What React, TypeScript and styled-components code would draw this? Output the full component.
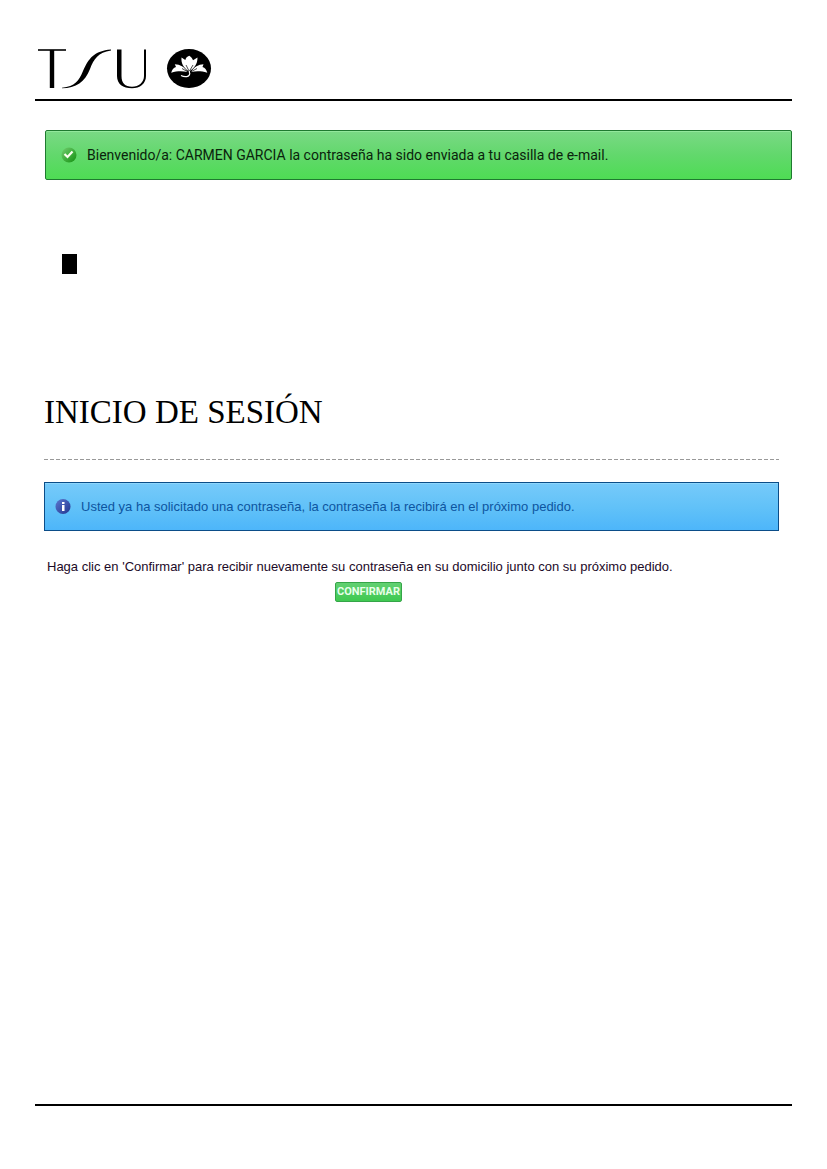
import React from "react";
import styled, { createGlobalStyle } from "styled-components";

const GlobalStyle = createGlobalStyle`
  *, *::before, *::after { box-sizing: border-box; }
  body {
    margin: 0;
    background: #fff;
    color: #000;
    font-family: "Liberation Sans", Arial, sans-serif;
  }
`;

const Page = styled.div`
  display: flex;
  flex-direction: column;
  min-height: 100vh;
  padding: 48px 35px 63px;
`;

const Header = styled.header`
  display: flex;
  height: 53px;
  border-bottom: 2px solid #000;
`;

const Logo = styled.svg`
  display: block;
  width: 180px;
  height: 42px;
`;

const Main = styled.main`
  flex: 1;
  padding: 29px 0 0 9px;
`;

const Notice = styled.div<{ $kind: "success" | "info" }>`
  display: flex;
  align-items: center;
  border: 1px solid ${(p) => (p.$kind === "success" ? "#1f7a30" : "#0b4d88")};
  border-radius: ${(p) => (p.$kind === "success" ? "2px" : "0")};
  background: ${(p) =>
    p.$kind === "success"
      ? "linear-gradient(#7ad985, #62d86c 50%, #4edc54)"
      : "linear-gradient(#76cafa, #62c2f8 50%, #4db6fa)"};
  box-shadow: inset 0 1px 0 ${(p) => (p.$kind === "success" ? "#93e89c" : "#8dd6fc")};
  color: ${(p) => (p.$kind === "success" ? "#0a230c" : "#0d55a0")};
`;

const SuccessNotice = styled(Notice)`
  gap: 10px;
  height: 50px;
  margin-left: 1px;
  padding: 0 15px;
  font-family: Roboto, "Liberation Sans", sans-serif;
  font-size: 14px;
`;

const InfoNotice = styled(Notice)`
  gap: 10px;
  height: 49px;
  padding: 0 10px;
  font-size: 13px;
`;

const StatusIcon = styled.svg`
  flex: none;
  width: 16px;
  height: 16px;
`;

const Marker = styled.div`
  width: 15px;
  height: 20px;
  margin: 74px 0 0 18px;
  background: #000;
`;

const Login = styled.section`
  margin: 120px 13px 0 0;
`;

const Title = styled.h1`
  margin: 0;
  font: 400 33px/36px "Liberation Serif", "Times New Roman", serif;
`;

const Divider = styled.svg`
  display: block;
  width: 100%;
  height: 1px;
  margin: 29px 0 22px;
`;

const ConfirmForm = styled.form`
  display: flex;
  flex-direction: column;
  align-items: center;
  gap: 7px;
  margin-top: 27px;
`;

const Message = styled.p`
  align-self: stretch;
  margin: 0;
  padding-left: 3px;
  font-size: 13px;
  line-height: 17px;
  color: #1c0a28;
`;

const ConfirmButton = styled.button`
  height: 20px;
  margin-right: 86px;
  padding: 0 1px;
  border: 1px solid #35a548;
  border-radius: 2px;
  background: linear-gradient(#62d072, #3fc951);
  color: #e8ffe9;
  font: 700 11px/18px Roboto, "Liberation Sans", sans-serif;
  cursor: pointer;
`;

const Footer = styled.footer`
  border-top: 2px solid #000;
`;

function TsuLogo() {
  return (
    <Logo viewBox="35 48 180 42" role="img" aria-label="TSU">
      <path d="M38 50H66" stroke="#000" strokeWidth="1.6" />
      <path d="M52 50V88" stroke="#000" strokeWidth="4.4" />
      <path d="M62 87.8C75 86.5 79 80.500 83 71C89 58 94 51 111 49.500V50.600C98 52.500 94 59 90 69C85 82 76 88 62 88.300Z" />
      <path d="M117 49.500H121.500V76C121.500 83 125 86.800 132 86.800C139 86.800 144 82 144 76V49.500H146V76C146 83.500 140 88.300 132 88.300C123 88.300 117 84 117 76Z" />
      <ellipse cx="189" cy="68.500" rx="22" ry="19.500" />
      <g fill="#fff">
        <path d="M188.500 71C183.500 67.500 181 63.500 181.500 57.500L185.300 60C186 58 187 56.500 189.300 55.800C191.200 57 192.400 58.500 193 60.200L197.500 57.500C197.500 64 194.500 68 189.800 71Z" />
        <path d="M187.500 72C184.500 67 180 64.500 174.800 64.300L176 67C173.500 67.800 172 69.800 171.200 72.800C177 71 182 71 187.500 72Z" />
        <path d="M191 72C194 67 198.500 64.500 203.500 64.300L202.500 67C205 67.800 206.500 69.800 207.300 72.800C201.500 71 196.500 71 191 72Z" />
      </g>
      <path d="M189 69C189.500 71 189 72.500 190 74M181 75.500C184.500 77.300 190 77.300 189.700 73" fill="none" stroke="#fff" strokeWidth="1.2" />
      <path d="M189 71L186 65M189.500 71L193 65M188 72L182 68.500M190.500 72L197 68.500" stroke="#000" strokeWidth=".7" />
    </Logo>
  );
}

function CheckIcon() {
  return (
    <StatusIcon viewBox="0 0 16 16" aria-hidden="true">
      <defs>
        <linearGradient id="checkFill" x1="0" y1="0" x2="1" y2="1">
          <stop stopColor="#72cd70" />
          <stop offset="1" stopColor="#12910f" />
        </linearGradient>
      </defs>
      <circle cx="8" cy="8" r="7.500" fill="url(#checkFill)" />
      <path d="M3.500 7L6.500 10L11.500 4.500" fill="none" stroke="#fbfff0" strokeWidth="2.200" />
    </StatusIcon>
  );
}

function InfoIcon() {
  return (
    <StatusIcon viewBox="0 0 16 16" aria-hidden="true">
      <defs>
        <linearGradient id="infoFill" x1="0" y1="0" x2="1" y2="1">
          <stop stopColor="#5a78d0" />
          <stop offset="1" stopColor="#23358f" />
        </linearGradient>
      </defs>
      <circle cx="8" cy="7.500" r="7.500" fill="url(#infoFill)" />
      <path d="M7 3H9.500V5H7ZM7 6H9.500V12H7Z" fill="#fff" />
    </StatusIcon>
  );
}

export default function App() {
  return (
    <>
      <GlobalStyle />
      <Page>
        <Header>
          <TsuLogo />
        </Header>
        <Main>
          <SuccessNotice $kind="success" role="status">
            <CheckIcon />
            <span>
              Bienvenido/a: CARMEN GARCIA la contraseña ha sido enviada a tu casilla de e-mail.
            </span>
          </SuccessNotice>
          <Marker />
          <Login>
            <Title>INICIO DE SESIÓN</Title>
            <Divider aria-hidden="true">
              <line x1="0" y1="0.5" x2="100%" y2="0.5" stroke="#999" strokeDasharray="4 2" />
            </Divider>
            <InfoNotice $kind="info" role="status">
              <InfoIcon />
              <span>
                Usted ya ha solicitado una contraseña, la contraseña la recibirá en el próximo pedido.
              </span>
            </InfoNotice>
            <ConfirmForm onSubmit={(event) => event.preventDefault()}>
              <Message>
                Haga clic en 'Confirmar' para recibir nuevamente su contraseña en su domicilio junto
                con su próximo pedido.
              </Message>
              <ConfirmButton type="submit">CONFIRMAR</ConfirmButton>
            </ConfirmForm>
          </Login>
        </Main>
        <Footer />
      </Page>
    </>
  );
}
